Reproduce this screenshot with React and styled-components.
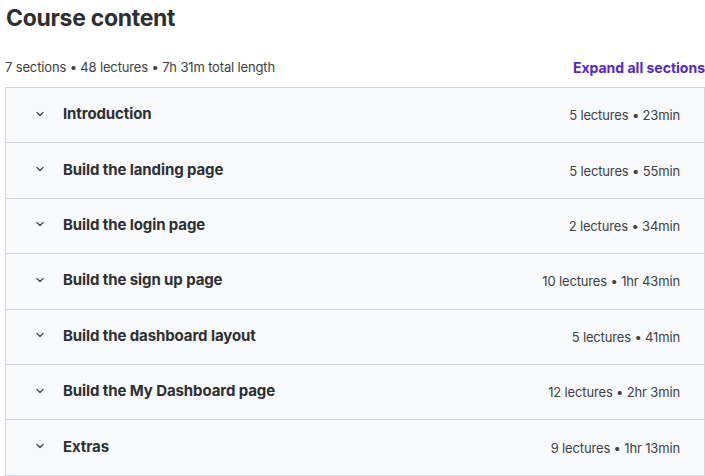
import React from "react";
import styled, { createGlobalStyle } from "styled-components";

const Global = createGlobalStyle`
  html, body { margin: 0; padding: 0; background: #fff; }
  body { font-family: Inter, "Noto Sans", sans-serif; color: #2d2f31; }
`;

const Page = styled.div`
  padding: 0 0 0 5px;
  width: 700px;
`;

const Title = styled.h2`
  margin: 0;
  padding: 4px 0 0 1px;
  font-size: 23px;
  line-height: 28px;
  font-weight: 700;
  letter-spacing: -0.3px;
  color: #2d2f31;
`;

const MetaBar = styled.div`
  display: flex;
  justify-content: space-between;
  align-items: center;
  margin-top: 26px;
  height: 18px;
  margin-bottom: 11px;
`;

const Meta = styled.span`
  font-size: 13px;
  letter-spacing: -0.15px;
  color: #3e4143;
`;

const Expand = styled.button`
  border: 0;
  background: none;
  padding: 0;
  font: inherit;
  font-size: 14px;
  font-weight: 700;
  color: #5624d0;
  cursor: pointer;
`;

const List = styled.div`
  border: 1px solid #d1d7dc;
  border-bottom: 0;
  background: #f7f9fa;
`;

const Row = styled.div`
  display: flex;
  align-items: center;
  height: 54.4px;
  border-bottom: 1px solid #d1d7dc;
  padding: 0 24px 0 28px;
`;

const Chevron = styled.svg`
  width: 12px;
  height: 12px;
  margin-right: 17px;
  margin-bottom: 3px;
  flex: none;
`;

const SectionTitle = styled.span`
  flex: 1;
  margin-bottom: 3px;
  font-size: 15px;
  font-weight: 700;
  letter-spacing: -0.1px;
  color: #2d2f31;
`;

const Info = styled.span`
  font-size: 13px;
  letter-spacing: -0.15px;
  color: #3e4143;
`;

const sections = [
  ["Introduction", "5 lectures • 23min"],
  ["Build the landing page", "5 lectures • 55min"],
  ["Build the login page", "2 lectures • 34min"],
  ["Build the sign up page", "10 lectures • 1hr 43min"],
  ["Build the dashboard layout", "5 lectures • 41min"],
  ["Build the My Dashboard page", "12 lectures • 2hr 3min"],
  ["Extras", "9 lectures • 1hr 13min"],
];

export default function App() {
  return (
    <Page>
      <Global />
      <Title>Course content</Title>
      <MetaBar>
        <Meta>7 sections • 48 lectures • 7h 31m total length</Meta>
        <Expand>Expand all sections</Expand>
      </MetaBar>
      <List>
        {sections.map(([name, info]) => (
          <Row key={name}>
            <Chevron viewBox="0 0 12 12">
              <path d="M3 4.5 L6 7.5 L9 4.5" fill="none" stroke="#3e4143" strokeWidth="1.2" strokeLinecap="round" strokeLinejoin="round" />
            </Chevron>
            <SectionTitle>{name}</SectionTitle>
            <Info>{info}</Info>
          </Row>
        ))}
      </List>
    </Page>
  );
}
